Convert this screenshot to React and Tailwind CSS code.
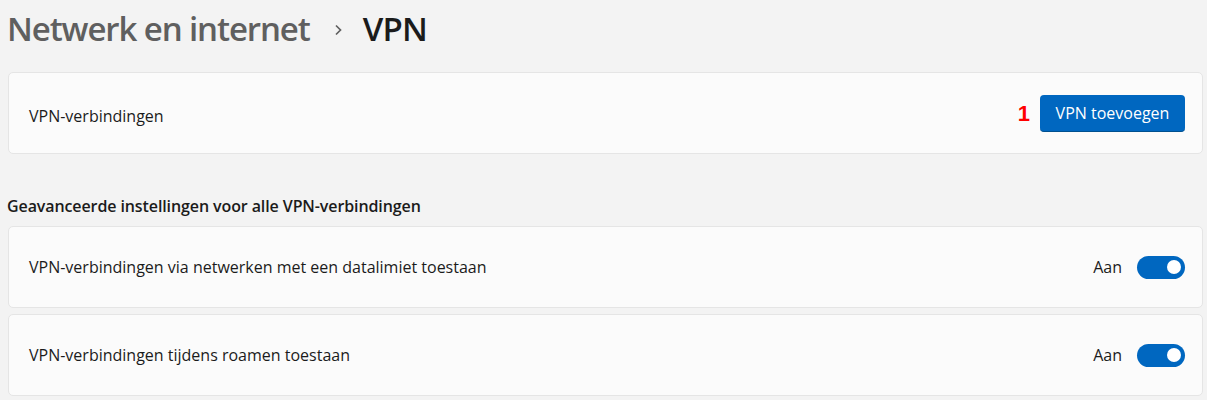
import React from "react";

function Toggle() {
  return (
    <div className="flex items-center gap-[15px]">
      <span className="text-[16px] text-[#1b1b1b]">Aan</span>
      <div className="w-[48px] h-[23px] rounded-full bg-[#0067c0] flex items-center justify-end pr-[4px]">
        <div className="w-[14px] h-[14px] rounded-full bg-white" />
      </div>
    </div>
  );
}

function Card({ children }) {
  return (
    <div className="h-[82px] bg-[#fbfbfb] border border-[#e5e5e5] rounded-[5px] flex items-center justify-between pl-[20px] pr-[17px]">
      {children}
    </div>
  );
}

export default function App() {
  return (
    <div
      className="w-[1207px] h-[400px] bg-[#f3f3f3] overflow-hidden pl-[8px] pr-[4px]"
      style={{ fontFamily: '"Open Sans", "Noto Sans", sans-serif' }}
    >
      <div className="flex items-center h-[57px] -ml-[1px] text-[33px] leading-none">
        <span className="text-[#5f5f5f] font-semibold tracking-[-1.1px]">Netwerk en internet</span>
        <svg className="ml-[23px] mr-[20px] mt-[2px]" width="10" height="14" viewBox="0 0 10 14">
          <path d="M3 2.5 L7.5 7 L3 11.5" fill="none" stroke="#5f5f5f" strokeWidth="1.7" />
        </svg>
        <span className="text-[#1b1b1b] font-semibold tracking-[-0.8px]">VPN</span>
      </div>
      <div className="mt-[15px]">
        <Card>
          <span className="text-[16px] text-[#1b1b1b] mt-[6px]">VPN-verbindingen</span>
          <div className="flex items-center gap-[10px]">
            <span className="text-[22px] font-bold text-[#ff0000] leading-none mt-[2px]" style={{ fontFamily: '"Liberation Sans", sans-serif' }}>1</span>
            <button className="w-[145px] h-[37px] rounded-[4px] bg-[#0067c0] text-white text-[16px] border-b border-[#00508f]">
              VPN toevoegen
            </button>
          </div>
        </Card>
      </div>
      <div className="mt-[42px] mb-[10px] -ml-[1px] text-[16px] font-semibold text-[#1b1b1b] leading-[20px] tracking-[-0.1px]">
        Geavanceerde instellingen voor alle VPN-verbindingen
      </div>
      <div className="flex flex-col gap-[6px]">
        <Card>
          <span className="text-[16px] text-[#1b1b1b]">VPN-verbindingen via netwerken met een datalimiet toestaan</span>
          <Toggle />
        </Card>
        <Card>
          <span className="text-[16px] text-[#1b1b1b]">VPN-verbindingen tijdens roamen toestaan</span>
          <Toggle />
        </Card>
      </div>
    </div>
  );
}
